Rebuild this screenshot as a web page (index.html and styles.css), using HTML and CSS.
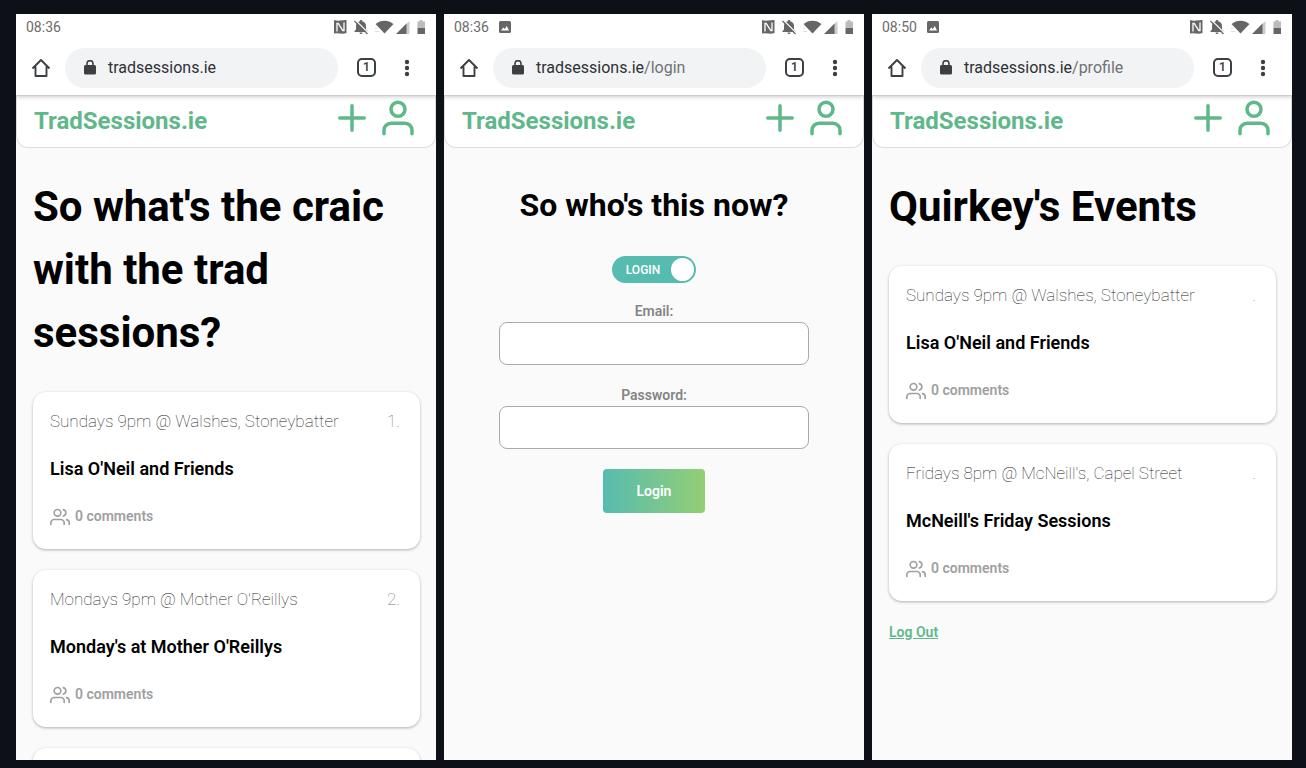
FILE: index.html
```html
<!DOCTYPE html>
<html lang="en">
<head>
<meta charset="utf-8">
<meta name="viewport" content="width=device-width, initial-scale=1">
<title>TradSessions.ie</title>
<link rel="stylesheet" href="styles.css">
</head>
<body>
<svg class="sprite" aria-hidden="true">
  <symbol id="i-status" viewBox="0 0 94 16">
    <path fill="#666" d="M2 1q3 1 6 .5T14.500 1v13q-3 1-6.500.5T2 14.500z"/>
    <path d="M5 12.500V4.500h1.200l4.600 7H12V3.500" fill="none" stroke="#fff" stroke-width="1.300"/>
    <path fill="#666" d="M29 1c.8 0 1.200.5 1.200 1.300 2.600.6 3.800 2.400 3.800 4.700v3.500l1.500 1.500v1H22.500v-1l1.500-1.500V7c0-2.300 1.200-4.100 3.800-4.700C27.800 1.500 28.200 1 29 1zM27.500 13.500h3c0 2-3 2-3 0z"/>
    <path d="M23 .8l13 13" stroke="#fff" stroke-width="1.300"/>
    <path d="M22.500 2l13 13" stroke="#666" stroke-width="1.300"/>
    <path fill="#666" d="M52.500 14.500L43.500 5c5-4.500 13-4.500 18 0z"/>
    <path fill="#bbb" d="M43.500 9h1v1h-1zM43.500 12h1v1h-1zM45.500 12h1v1h-1z"/>
    <path fill="#ccc" d="M77.500 2v13H73V6z"/>
    <path fill="#666" d="M74.500 4.500V15H64z"/>
    <path fill="#bbb" d="M87.500 1h3v1.500H93V9h-7.500V2.500h2z"/>
    <path fill="#666" d="M85.500 9H93v6h-7.500z"/>
  </symbol>
  <symbol id="i-photo" viewBox="0 0 12 12">
    <rect width="12" height="12" rx="1.500" fill="#666"/>
    <path fill="#fff" d="M2 9.500l2.300-3 1.500 1.600 2-3L10 9.500z"/>
  </symbol>
  <symbol id="i-home" viewBox="0 0 20 20">
    <path d="M1.500 10.500L10 2l8.500 8.500M4.500 8.500V18h11V8.500" fill="none" stroke="#3c4043" stroke-width="1.900" stroke-linejoin="round"/>
  </symbol>
  <symbol id="i-lock" viewBox="0 0 12 16">
    <rect y="5" width="12" height="9.500" rx="1.500" fill="#3c4043"/>
    <path d="M3 6V3.700a3 3 0 0 1 6 0V6" fill="none" stroke="#3c4043" stroke-width="1.500"/>
  </symbol>
  <symbol id="i-dots" viewBox="0 0 6 18">
    <g fill="#3c4043"><circle cx="3" cy="3" r="2.200"/><circle cx="3" cy="9" r="2.200"/><circle cx="3" cy="15" r="2.200"/></g>
  </symbol>
  <symbol id="i-plus" viewBox="0 0 24 24">
    <path d="M12 5v14M5 12h14"/>
  </symbol>
  <symbol id="i-user" viewBox="0 0 24 24">
    <path d="M20 21v-2a4 4 0 0 0-4-4H8a4 4 0 0 0-4 4v2"/><circle cx="12" cy="7" r="4"/>
  </symbol>
  <symbol id="i-users" viewBox="0 0 24 24">
    <path d="M17 21v-2a4 4 0 0 0-4-4H5a4 4 0 0 0-4 4v2"/><circle cx="9" cy="7" r="4"/><path d="M23 21v-2a4 4 0 0 0-3-3.870M16 3.130a4 4 0 0 1 0 7.750"/>
  </symbol>
</svg>

<main class="gallery">
  <section class="phone">
    <div class="status"><span class="clock">08:36</span><svg class="status-icons"><use href="#i-status"/></svg></div>
    <div class="browser">
      <button class="chrome-btn" aria-label="Home"><svg class="home"><use href="#i-home"/></svg></button>
      <button class="address"><svg class="lock"><use href="#i-lock"/></svg><span>tradsessions.ie</span></button>
      <button class="tabs" aria-label="Tabs">1</button>
      <button class="chrome-btn" aria-label="More"><svg class="dots"><use href="#i-dots"/></svg></button>
    </div>
    <header class="site-header">
      <a class="brand" href="#">TradSessions.ie</a>
      <nav class="site-nav">
        <a href="#" aria-label="Add session"><svg class="nav-icon"><use href="#i-plus"/></svg></a>
        <a href="#" aria-label="Profile"><svg class="nav-icon"><use href="#i-user"/></svg></a>
      </nav>
    </header>
    <div class="content">
      <h1 class="title">So what's the craic with the trad sessions?</h1>
      <article class="card">
        <div class="card-top"><span class="when">Sundays 9pm @ Walshes, Stoneybatter</span><span class="rank">1.</span></div>
        <h2 class="name">Lisa O'Neil and Friends</h2>
        <div class="comments"><svg class="users"><use href="#i-users"/></svg><span>0 comments</span></div>
      </article>
      <article class="card">
        <div class="card-top"><span class="when">Mondays 9pm @ Mother O'Reillys</span><span class="rank">2.</span></div>
        <h2 class="name">Monday's at Mother O'Reillys</h2>
        <div class="comments"><svg class="users"><use href="#i-users"/></svg><span>0 comments</span></div>
      </article>
      <article class="card card-empty"></article>
    </div>
  </section>

  <section class="phone">
    <div class="status"><span class="clock">08:36</span><svg class="photo"><use href="#i-photo"/></svg><svg class="status-icons"><use href="#i-status"/></svg></div>
    <div class="browser">
      <button class="chrome-btn" aria-label="Home"><svg class="home"><use href="#i-home"/></svg></button>
      <button class="address"><svg class="lock"><use href="#i-lock"/></svg><span>tradsessions.ie<span class="path">/login</span></span></button>
      <button class="tabs" aria-label="Tabs">1</button>
      <button class="chrome-btn" aria-label="More"><svg class="dots"><use href="#i-dots"/></svg></button>
    </div>
    <header class="site-header">
      <a class="brand" href="#">TradSessions.ie</a>
      <nav class="site-nav">
        <a href="#" aria-label="Add session"><svg class="nav-icon"><use href="#i-plus"/></svg></a>
        <a href="#" aria-label="Profile"><svg class="nav-icon"><use href="#i-user"/></svg></a>
      </nav>
    </header>
    <form class="login">
      <h1 class="login-title">So who's this now?</h1>
      <label class="toggle"><span>LOGIN</span><input class="toggle-input" type="checkbox" checked></label>
      <label class="field-label" for="email">Email:</label>
      <input class="field" id="email" type="email">
      <label class="field-label" for="password">Password:</label>
      <input class="field" id="password" type="password">
      <button class="submit" type="submit">Login</button>
    </form>
  </section>

  <section class="phone">
    <div class="status"><span class="clock">08:50</span><svg class="photo"><use href="#i-photo"/></svg><svg class="status-icons"><use href="#i-status"/></svg></div>
    <div class="browser">
      <button class="chrome-btn" aria-label="Home"><svg class="home"><use href="#i-home"/></svg></button>
      <button class="address"><svg class="lock"><use href="#i-lock"/></svg><span>tradsessions.ie<span class="path">/profile</span></span></button>
      <button class="tabs" aria-label="Tabs">1</button>
      <button class="chrome-btn" aria-label="More"><svg class="dots"><use href="#i-dots"/></svg></button>
    </div>
    <header class="site-header">
      <a class="brand" href="#">TradSessions.ie</a>
      <nav class="site-nav">
        <a href="#" aria-label="Add session"><svg class="nav-icon"><use href="#i-plus"/></svg></a>
        <a href="#" aria-label="Profile"><svg class="nav-icon"><use href="#i-user"/></svg></a>
      </nav>
    </header>
    <div class="content">
      <h1 class="title">Quirkey's Events</h1>
      <article class="card">
        <div class="card-top"><span class="when">Sundays 9pm @ Walshes, Stoneybatter</span><span class="rank">.</span></div>
        <h2 class="name">Lisa O'Neil and Friends</h2>
        <div class="comments"><svg class="users"><use href="#i-users"/></svg><span>0 comments</span></div>
      </article>
      <article class="card">
        <div class="card-top"><span class="when">Fridays 8pm @ McNeill's, Capel Street</span><span class="rank">.</span></div>
        <h2 class="name">McNeill's Friday Sessions</h2>
        <div class="comments"><svg class="users"><use href="#i-users"/></svg><span>0 comments</span></div>
      </article>
      <a class="logout" href="#">Log Out</a>
    </div>
  </section>
</main>
</body>
</html>
```
FILE: styles.css
```css
* { box-sizing: border-box; }
body {
  margin: 0;
  background: #0d1117;
  color: #000;
  font-family: Roboto, "Liberation Sans", sans-serif;
}
button, input { font: inherit; }
button { border: 0; background: none; padding: 0; color: inherit; cursor: pointer; }
.sprite { display: none; }

.gallery {
  display: grid;
  grid-template-columns: repeat(3, minmax(0, 1fr));
  gap: 8px;
  height: 100vh;
  padding: 14px 14px 8px 16px;
}
.phone {
  display: flex;
  flex-direction: column;
  min-height: 0;
  overflow: hidden;
  background: #fafafa;
}
.phone > * { flex-shrink: 0; }

/* Android status bar */
.status {
  position: relative;
  z-index: 2;
  display: flex;
  align-items: center;
  gap: 10px;
  height: 26px;
  padding: 0 10px;
  background: #fff;
}
.clock { font-size: 14px; color: #6b6b6b; }
.photo { width: 12px; height: 12px; }
.status-icons { width: 94px; height: 16px; margin-left: auto; }

/* Browser toolbar */
.browser {
  position: relative;
  z-index: 1;
  display: flex;
  align-items: center;
  height: 56px;
  padding: 0 26px 0 15px;
  background: #fff;
  border-bottom: 1px solid #ccc;
  box-shadow: 0 1px 4px rgba(0, 0, 0, .2);
}
.chrome-btn { display: flex; }
.home { width: 20px; height: 20px; }
.dots { width: 6px; height: 18px; }
.address {
  display: flex;
  align-items: center;
  flex: 1;
  gap: 12px;
  height: 40px;
  margin: 0 19px 0 14px;
  padding: 0 19px;
  border-radius: 20px;
  background: #f1f3f4;
  color: #303134;
  font-size: 16px;
}
.lock { width: 12px; height: 16px; }
.path { color: #6f7275; }
.tabs {
  width: 19px;
  height: 19px;
  margin-right: 28px;
  border: 2px solid #3c4043;
  border-radius: 5px;
  color: #3c4043;
  font-size: 12px;
  font-weight: 600;
  line-height: 15px;
}

/* Site header */
.site-header {
  display: flex;
  align-items: center;
  justify-content: space-between;
  height: 52px;
  padding: 0 16px 8px 17px;
  background: #fff;
  border: 1px solid #ddd;
  border-top: 0;
  border-radius: 0 0 12px 12px;
}
.brand {
  padding-top: 7px;
  color: #5fb88a;
  font-size: 24px;
  font-weight: 700;
  text-decoration: none;
}
.site-nav { display: flex; gap: 4px; }
.site-nav a { display: flex; }
.nav-icon {
  width: 42px;
  height: 42px;
  fill: none;
  stroke: #5fb88a;
  stroke-width: 2;
  stroke-linecap: round;
  stroke-linejoin: round;
}

/* Session list */
.content {
  display: flex;
  flex-direction: column;
  gap: 21px;
  padding: 27px 16px 0 17px;
}
.title {
  margin: 0 0 7px;
  font-size: 42px;
  font-weight: 700;
  line-height: 63px;
}
.card {
  display: flex;
  flex-direction: column;
  gap: 22px;
  padding: 16px 17px 20px;
  background: #fff;
  border-radius: 13px;
  box-shadow: 0 1px 3px rgba(0, 0, 0, .3);
}
.card-empty { height: 157px; }
.card-top {
  display: flex;
  justify-content: space-between;
  padding-right: 3px;
  font-size: 17px;
  font-weight: 100;
  line-height: 26px;
}
.when { color: #222; }
.rank { color: #777; }
.name {
  margin: 0;
  font-size: 18px;
  font-weight: 600;
  line-height: 26px;
}
.comments {
  display: flex;
  align-items: center;
  gap: 5px;
  color: #a0a0a0;
  font-size: 14px;
  font-weight: 600;
  line-height: 25px;
}
.users {
  width: 20px;
  height: 20px;
  fill: none;
  stroke: currentColor;
  stroke-width: 2;
  stroke-linecap: round;
  stroke-linejoin: round;
}
.logout {
  align-self: flex-start;
  color: #5fb88a;
  font-size: 14px;
  font-weight: 600;
  line-height: 20px;
}

/* Login form */
.login {
  display: flex;
  flex-direction: column;
  align-items: center;
  padding: 33px 55px 0;
}
.login-title {
  margin: 0 0 27px;
  font-size: 32px;
  font-weight: 700;
  line-height: 48px;
}
.toggle {
  display: flex;
  align-items: center;
  gap: 11px;
  height: 27px;
  margin-bottom: 18px;
  padding: 0 2px 0 14px;
  border-radius: 14px;
  background: #56bcb0;
  color: #fff;
  font-size: 12px;
  font-weight: 500;
}
.toggle-input {
  appearance: none;
  width: 23px;
  height: 23px;
  margin: 0;
  border-radius: 50%;
  background: #fff;
}
.field-label {
  color: #858585;
  font-size: 14px;
  font-weight: 600;
  line-height: 21px;
}
.field {
  width: 100%;
  height: 43px;
  margin-bottom: 20px;
  padding: 0 12px;
  border: 1px solid #aaa;
  border-radius: 8px;
  background: #fff;
}
.submit {
  width: 102px;
  height: 44px;
  border-radius: 4px;
  background: linear-gradient(90deg, #56bcb0, #94ce75);
  color: #fff;
  font-size: 14px;
  font-weight: 600;
}
```
